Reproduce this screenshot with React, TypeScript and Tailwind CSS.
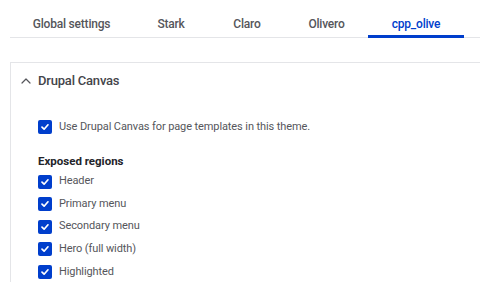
import { ChevronUp } from "lucide-react";

const tabs = [
  { label: "Global settings", w: "w-[123px]" },
  { label: "Stark", w: "w-[76px]" },
  { label: "Claro", w: "w-[76px]" },
  { label: "Olivero", w: "w-[83px]" },
  { label: "cpp_olive", w: "w-[96px]", active: true },
];

const regions = ["Header", "Primary menu", "Secondary menu", "Hero (full width)", "Highlighted"];

const Check = () => (
  <span className="flex h-[14px] w-[14px] shrink-0 items-center justify-center rounded-[2px] bg-[#003ecc]">
    <svg width="10" height="10" viewBox="0 0 10 10" fill="none">
      <path d="M2 5.2 4.1 7.2 8 2.8" stroke="white" strokeWidth="1.7" strokeLinecap="round" strokeLinejoin="round" />
    </svg>
  </span>
);

export default function App() {
  return (
    <div
      className="h-[282px] w-[480px] overflow-hidden bg-white text-[#55565b]"
      style={{ fontFamily: "Roboto, sans-serif" }}
    >
      <div className="ml-[10px] flex h-[38px] border-b border-[#e4e5e8]">
        {tabs.map((t) => (
          <div
            key={t.label}
            className={`${t.w} relative flex items-center justify-center pt-[11px] text-[12px] font-medium tracking-[-0.2px] ${
              t.active ? "text-[#003ecc]" : "text-[#55565b]"
            }`}
          >
            {t.label}
            {t.active && <span className="absolute bottom-[-1px] left-0 right-0 h-[3px] bg-[#003ecc]" />}
          </div>
        ))}
      </div>

      <div className="ml-[10px] mt-[24px] border-l border-t border-[#e4e5e8]">
        <div className="flex h-[36px] items-center gap-[4px] pl-[7px]">
          <ChevronUp size={16} strokeWidth={1.8} className="text-[#55565b]" />
          <span className="text-[13px] font-medium tracking-[-0.2px] text-[#44454a]">Drupal Canvas</span>
        </div>
        <div className="pl-[27px] pt-[21px]">
          <div className="flex h-[14px] items-center gap-[7px] text-[11px] tracking-[-0.1px]">
            <Check />
            <span>Use Drupal Canvas for page templates in this theme.</span>
          </div>
          <div className="mt-[19px] text-[11.5px] font-bold text-[#232429]">Exposed regions</div>
          <div className="flex flex-col">
            {regions.map((r) => (
              <div key={r} className="flex h-[22.6px] items-center gap-[7px] text-[11px] tracking-[-0.1px]">
                <Check />
                <span>{r}</span>
              </div>
            ))}
          </div>
        </div>
      </div>
    </div>
  );
}
